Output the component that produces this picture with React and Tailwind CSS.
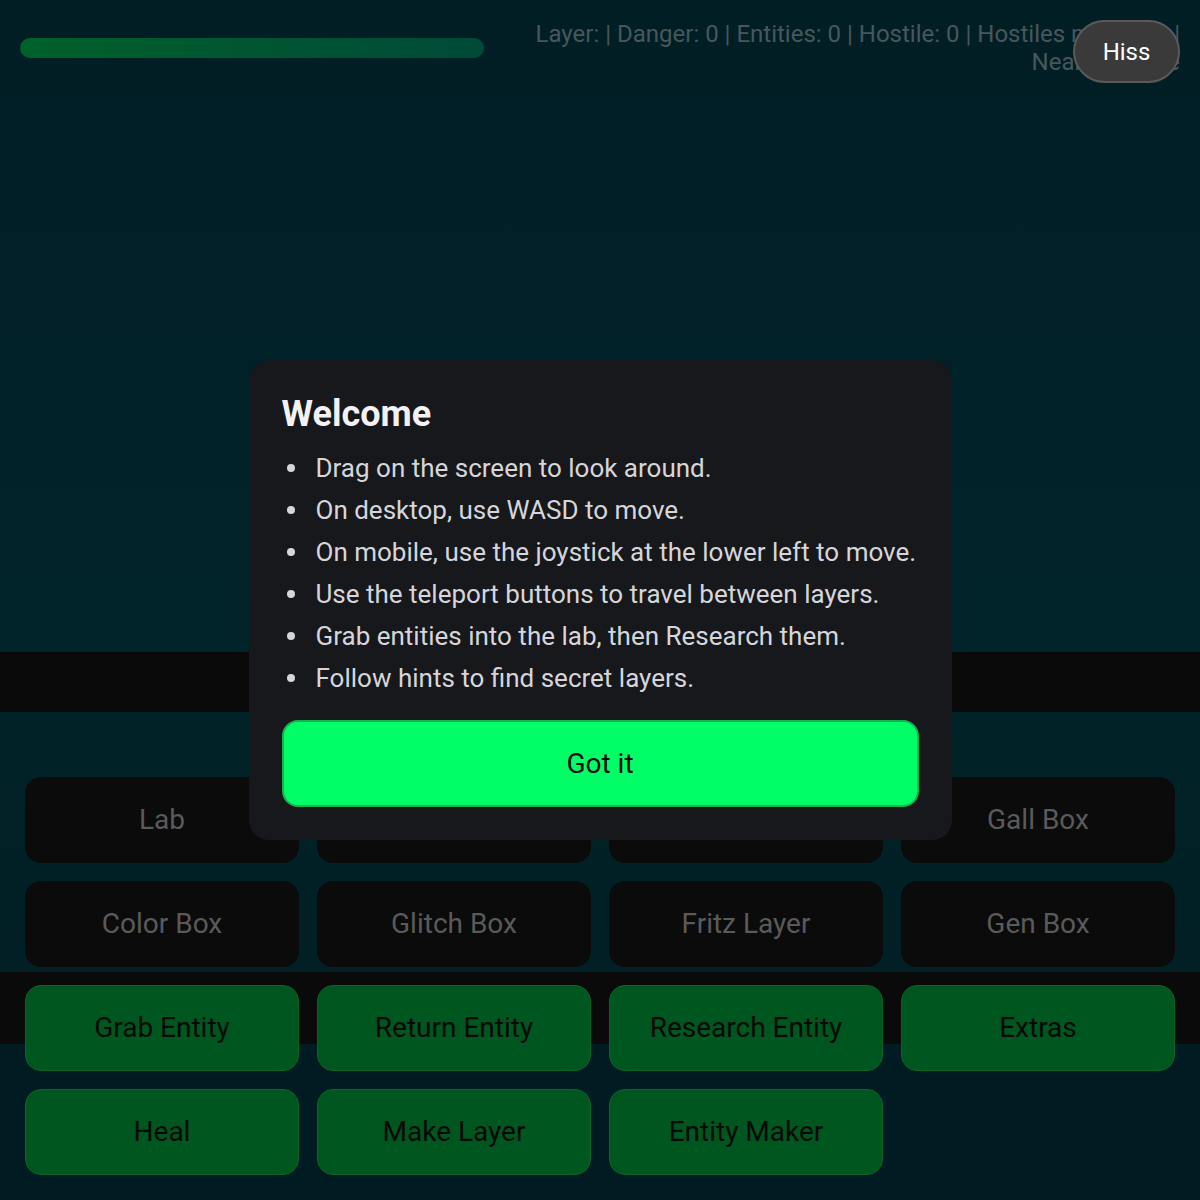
import { useState } from 'react';

// Fondo de la escena: franjas oscuras del suelo sobre el verde azulado.
const fondoEscena =
  'bg-[linear-gradient(to_bottom,#011e25_0px,#01232a_600px,#01232a_652px,#0a0a0a_652px,#0a0a0a_712px,#012328_712px,#011f25_972px,#0a0a0a_972px,#0a0a0a_1044px,#001b21_1044px)]';

const consejos = [
  'Drag on the screen to look around.',
  'On desktop, use WASD to move.',
  'On mobile, use the joystick at the lower left to move.',
  'Use the teleport buttons to travel between layers.',
  'Grab entities into the lab, then Research them.',
  'Follow hints to find secret layers.',
];

// Botones de teletransporte (apagados) y de accion (verdes).
const botones = [
  { texto: 'Lab', tipo: 'capa' },
  { texto: 'Teleport Up', tipo: 'capa' },
  { texto: 'Teleport Down', tipo: 'capa' },
  { texto: 'Gall Box', tipo: 'capa' },
  { texto: 'Color Box', tipo: 'capa' },
  { texto: 'Glitch Box', tipo: 'capa' },
  { texto: 'Fritz Layer', tipo: 'capa' },
  { texto: 'Gen Box', tipo: 'capa' },
  { texto: 'Grab Entity', tipo: 'accion' },
  { texto: 'Return Entity', tipo: 'accion' },
  { texto: 'Research Entity', tipo: 'accion' },
  { texto: 'Extras', tipo: 'accion' },
  { texto: 'Heal', tipo: 'accion' },
  { texto: 'Make Layer', tipo: 'accion' },
  { texto: 'Entity Maker', tipo: 'accion' },
];

function App() {
  const [bienvenida, setBienvenida] = useState(true);

  return (
    <div className={`relative h-[1200px] w-full overflow-hidden font-['Roboto',sans-serif] ${fondoEscena} flex flex-col`}>
      <header className="flex items-start justify-between px-5">
        <div className="mt-[38px] h-5 w-[464px] rounded-full bg-gradient-to-r from-[#006129] to-[#004a38]" />
        <p className="mt-[20px] max-w-[680px] text-right text-[24px] leading-[28px] text-[#47575c]">
          Layer: | Danger: 0 | Entities: 0 | Hostile: 0 | Hostiles nearby: 0 |<br />
          Nearest: none
        </p>
      </header>

      <button className="absolute right-5 top-5 h-[63px] w-[107px] rounded-[32px] border-2 border-[#5a5a5a] bg-[#3a3a3a] text-[24px] text-white">
        Hiss
      </button>

      <div className="flex-1" />

      <div className="grid grid-cols-4 gap-[18px] px-[25px] pb-[25px]">
        {botones.map((boton) => (
          <button
            key={boton.texto}
            className={
              boton.tipo === 'accion'
                ? 'h-[86px] rounded-2xl border border-[#0b6428] bg-[#00561f] text-[28px] text-[#050905]'
                : 'h-[86px] rounded-2xl bg-[#0b0b0b] text-[28px] text-[#5a5a5a]'
            }
          >
            {boton.texto}
          </button>
        ))}
      </div>

      {bienvenida && (
        <div className="absolute inset-0 flex items-center justify-center">
          <div className="w-[703px] rounded-[20px] bg-[#17181c] px-[33px] pb-[33px] pt-[32px]">
            <h2 className="text-[36px] font-bold leading-[44px] text-[#f2f2f4]">Welcome</h2>
            <ul className="mt-[11px]">
              {consejos.map((consejo) => (
                <li key={consejo} className="flex items-center text-[26px] leading-[42px] text-[#d6d6da]">
                  <span className="ml-[5px] mr-[21px] h-[8px] w-[8px] rounded-full bg-[#d6d6da]" />
                  {consejo}
                </li>
              ))}
            </ul>
            <button
              onClick={() => setBienvenida(false)}
              className="mt-[21px] h-[87px] w-full rounded-2xl border-2 border-[#17b14f] bg-[#00ff66] text-[28px] text-[#0a0a0a]"
            >
              Got it
            </button>
          </div>
        </div>
      )}
    </div>
  );
}

export default App;
